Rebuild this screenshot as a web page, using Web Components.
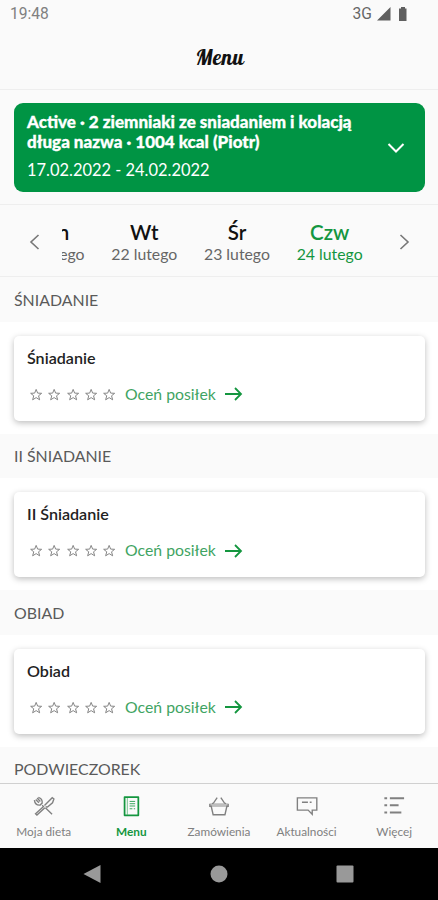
<!DOCTYPE html>
<html lang="pl">
<head>
<meta charset="utf-8">
<title>Menu</title>
<style>
    html, body {
        margin: 0;
        height: 100%;
        overflow: hidden;
        background: #fafafa;
        font-family: Lato, "Liberation Sans", sans-serif;
    }
</style>
</head>
<body>
<menu-app></menu-app>

<script>
const icons = {
    diet: `<path d="M13 14 4.300 21.800 2.800 20.500 11.500 12.500M12.500 11.500 21 3 22.800 4.300 21.300 8.500 15.800 13.200 13.800 12.800M13.500 14 20.800 21M10 11.200 12 13M1.500 5.500C2 9 4.500 11.300 7.700 11L10 8.800C10.300 6 8.800 3.300 5.800 2.500M3 5 6.500 8.500M4.500 3.300 8 7" stroke-width="1.500"/>`,
    menu: `<path d="M5 2.200h15v20H5z" stroke-width="1.900" stroke-linejoin="round"/><path d="M8 3v18.500" stroke-width=".6"/><path d="M10.500 7h6M10.500 9.500h6M10.500 12h6M10.500 15h3M15 15h1.500" stroke-width=".9"/>`,
    orders: `<path d="M2.500 9h19v4h-19z" fill="currentColor" opacity=".5" stroke="none"/><path d="M2 9.500v2.800h1.500L5.600 21.500h12.900l2.100-9.200h1.400V9.500" stroke-width="1.500"/><path d="M4.500 9.500 6 8.800 10 2.800M19.500 9.500 18 8.800 14 2.800" stroke-width="1.500"/>`,
    news: `<path d="M1.500 3.200h21.200v13.300h-5v4.500L13.200 16.500H1.500z" stroke-width="1.500"/><path d="M6.500 8h6.500M15 8h2" stroke-width="1.700"/>`,
    more: `<path d="M1.500 3.500h3M1.500 11.300h3M1.500 19h3M7.500 3.500h15.500M7.500 11.300h9.500M7.500 19h12.500" stroke-width="2.200"/>`
};

class StatusBar extends HTMLElement {
    constructor() {
        super();
        this.attachShadow({ mode: 'open' });
    }

    connectedCallback() {
        this.shadowRoot.innerHTML = `
            <style>
                :host {
                    display: flex;
                    align-items: center;
                    justify-content: space-between;
                    height: 28px;
                    padding: 0 30px 0 10px;
                    box-sizing: border-box;
                    font: 15.600px/29px Roboto, sans-serif;
                    color: #808080;
                }

                .signals {
                    display: flex;
                    align-items: center;
                    color: #666;
                }

                svg {
                    display: block;
                    fill: #5f5f5f;
                }
            </style>
            <span>19:48</span>
            <div class="signals">
                <span>3G</span>
                <svg width="36" height="16" viewBox="0 0 36 16"><path d="M5 14.500 18.500 1v13.500zM29 1h4v1.500h1.500V15h-7.500V2.500h2z"/></svg>
            </div>
        `;
    }
}

class PlanCard extends HTMLElement {
    constructor() {
        super();
        this.attachShadow({ mode: 'open' });
    }

    connectedCallback() {
        this.shadowRoot.innerHTML = `
            <style>
                :host {
                    display: flex;
                    align-items: center;
                    justify-content: space-between;
                    height: 89px;
                    padding: 0 20px 0 13px;
                    box-sizing: border-box;
                    border-radius: 9px;
                    background: #009444;
                    color: #fff;
                }

                .text {
                    padding-bottom: 4px;
                }

                .name {
                    font-size: 17px;
                    font-weight: 900;
                    line-height: 20px;
                    white-space: nowrap;
                    -webkit-text-stroke: .3px #fff;
                }

                .dates {
                    margin-top: 8px;
                    font-size: 16.450px;
                    line-height: 20px;
                }

                svg {
                    fill: none;
                    stroke: #fff;
                    stroke-width: 2;
                }
            </style>
            <div class="text">
                <div class="name"><slot></slot></div>
                <div class="dates"><slot name="dates"></slot></div>
            </div>
            <svg width="18" height="12" viewBox="0 0 18 12"><path d="m1.500 2 7.500 7.500L16.500 2"/></svg>
        `;
    }
}

class DayPicker extends HTMLElement {
    constructor() {
        super();
        this.attachShadow({ mode: 'open' });
    }

    connectedCallback() {
        this.shadowRoot.innerHTML = `
            <style>
                :host {
                    display: flex;
                    align-items: center;
                    height: 72px;
                    box-sizing: border-box;
                    border-bottom: 1px solid #eee;
                }

                .arrow {
                    display: flex;
                    flex: none;
                    justify-content: center;
                    box-sizing: border-box;
                    padding-top: 2px;
                    width: 62px;
                }

                .prev {
                    padding-left: 6px;
                }

                .next {
                    padding-right: 6px;
                }

                .days {
                    display: flex;
                    flex: 1;
                    justify-content: flex-end;
                    padding-top: 4px;
                    overflow: hidden;
                }

                svg {
                    fill: none;
                    stroke: #777;
                    stroke-width: 1.600;
                }
            </style>
            <div class="arrow prev"><svg width="11" height="16" viewBox="0 0 11 16"><path d="M9.500 1 2 8l7.500 7"/></svg></div>
            <div class="days"><slot></slot></div>
            <div class="arrow next"><svg width="11" height="16" viewBox="0 0 11 16"><path d="M1.500 1 9 8l-7.500 7"/></svg></div>
        `;
    }
}

class DayItem extends HTMLElement {
    constructor() {
        super();
        this.attachShadow({ mode: 'open' });
    }

    connectedCallback() {
        this.shadowRoot.innerHTML = `
            <style>
                :host {
                    display: block;
                    flex: none;
                    width: 92.700px;
                    text-align: center;
                    white-space: nowrap;
                    color: #111;
                }

                .day {
                    font-size: 20.500px;
                    font-weight: 600;
                    line-height: 22px;
                }

                .date {
                    font-size: 15.800px;
                    line-height: 22px;
                    color: #666;
                }

                :host([active]), :host([active]) .date {
                    color: #14963f;
                }
            </style>
            <div class="day">${this.getAttribute('day')}</div>
            <div class="date">${this.getAttribute('date')}</div>
        `;
    }
}

class MealSection extends HTMLElement {
    constructor() {
        super();
        this.attachShadow({ mode: 'open' });
    }

    connectedCallback() {
        const meal = this.getAttribute('meal');
        const star = '<svg width="18.300" height="16" viewBox="-9.150 -8 18.300 16"><path d="M0-5.600 1.500-1.900 5.500-1.700 2.400.8 3.500 4.800 0 2.600-3.500 4.800-2.400.8-5.500-1.700-1.500-1.900z"/></svg>';

        this.shadowRoot.innerHTML = `
            <style>
                :host {
                    display: block;
                    flex: none;
                    height: 156.450px;
                }

                h2 {
                    margin: 0;
                    padding: 1px 0 .5px 14px;
                    font-size: 15.900px;
                    font-weight: 400;
                    line-height: 43.400px;
                    color: #5a5a5a;
                }

                .body {
                    height: 112px;
                    box-sizing: border-box;
                    padding: 14px 13px 0 14px;
                    background: #fff;
                }

                .card {
                    height: 85px;
                    box-sizing: border-box;
                    padding: 12px 13px 0;
                    border-radius: 5px;
                    background: #fff;
                    box-shadow: 0 2px 6px rgba(0, 0, 0, .26);
                }

                .name {
                    font-size: 16.100px;
                    font-weight: 600;
                    line-height: 20px;
                    color: #222;
                }

                .rate {
                    display: flex;
                    align-items: center;
                    margin-top: 16px;
                    height: 22px;
                    font-size: 15.800px;
                    line-height: 20px;
                    color: #3fa463;
                }

                .rate span {
                    padding-bottom: 2px;
                }

                .stars {
                    display: flex;
                    width: 98px;
                }

                svg {
                    display: block;
                    flex: none;
                    fill: none;
                    stroke: #858585;
                    stroke-width: 1;
                }

                .go {
                    margin: 0 0 1px 8px;
                    stroke: #14963f;
                    stroke-width: 1.800;
                }
            </style>
            <h2>${meal.toUpperCase()}</h2>
            ${this.hasAttribute('collapsed') ? '' : `
                <div class="body">
                    <div class="card">
                        <div class="name">${meal}</div>
                        <div class="rate">
                            <div class="stars">${star.repeat(5)}</div>
                            <span>Oceń posiłek</span>
                            <svg class="go" width="19" height="16" viewBox="0 0 19 16"><path d="M1 8h16M11 2l6 6-6 6"/></svg>
                        </div>
                    </div>
                </div>
            `}
        `;
    }
}

class TabItem extends HTMLElement {
    constructor() {
        super();
        this.attachShadow({ mode: 'open' });
    }

    connectedCallback() {
        this.shadowRoot.innerHTML = `
            <style>
                :host {
                    display: flex;
                    flex: 1;
                    flex-direction: column;
                    align-items: center;
                    padding-top: 11px;
                    font-size: 11.800px;
                    line-height: 16px;
                    white-space: nowrap;
                    color: #808080;
                }

                :host([active]) {
                    font-weight: 700;
                    color: #14963f;
                }

                svg {
                    display: block;
                    margin-bottom: 7px;
                    fill: none;
                    stroke: currentColor;
                    stroke-width: 1.300;
                }
            </style>
            <svg width="22" height="22" viewBox="0 0 24 24">${icons[this.getAttribute('icon')]}</svg>
            <span><slot></slot></span>
        `;
    }
}

class SystemNav extends HTMLElement {
    constructor() {
        super();
        this.attachShadow({ mode: 'open' });
    }

    connectedCallback() {
        this.shadowRoot.innerHTML = `
            <style>
                :host {
                    display: flex;
                    align-items: center;
                    justify-content: space-between;
                    flex: none;
                    height: 52px;
                    padding: 0 84px 0 83px;
                    box-sizing: border-box;
                    background: #000;
                }

                svg {
                    fill: #999;
                }
            </style>
            <svg width="18" height="18"><path d="M17.500 0v18L.5 9z"/></svg>
            <svg width="18" height="18"><circle cx="9" cy="9" r="8.500"/></svg>
            <svg width="18" height="18"><rect x=".5" y=".5" width="17" height="17" rx="1"/></svg>
        `;
    }
}

class MenuApp extends HTMLElement {
    constructor() {
        super();
        this.attachShadow({ mode: 'open' });
    }

    connectedCallback() {
        this.shadowRoot.innerHTML = `
            <style>
                :host {
                    display: flex;
                    flex-direction: column;
                    height: 900px;
                    background: #fafafa;
                }

                h1 {
                    flex: none;
                    height: 62px;
                    margin: 0;
                    padding-left: 2px;
                    box-sizing: border-box;
                    border-bottom: 1px solid #eee;
                    font: 400 21.500px/58px Lobster, "Liberation Serif", serif;
                    letter-spacing: .5px;
                    text-align: center;
                    color: #111;
                }

                .plan {
                    flex: none;
                    height: 115px;
                    box-sizing: border-box;
                    padding: 13px 13px 0 14px;
                    border-bottom: 1px solid #eee;
                }

                .meals {
                    display: flex;
                    flex: 1;
                    flex-direction: column;
                    min-height: 0;
                    overflow: hidden;
                }

                .tabs {
                    display: flex;
                    flex: none;
                    height: 65px;
                    box-sizing: border-box;
                    border-top: 1px solid #d0d0d0;
                }
            </style>
            <status-bar></status-bar>
            <h1>Menu</h1>
            <div class="plan">
                <plan-card>
                    Active · 2 ziemniaki ze sniadaniem i kolacją<br>długa nazwa · 1004 kcal (Piotr)
                    <span slot="dates">17.02.2022 - 24.02.2022</span>
                </plan-card>
            </div>
            <day-picker>
                <day-item day="Pon" date="21 lutego"></day-item>
                <day-item day="Wt" date="22 lutego"></day-item>
                <day-item day="Śr" date="23 lutego"></day-item>
                <day-item day="Czw" date="24 lutego" active></day-item>
            </day-picker>
            <div class="meals">
                <meal-section meal="Śniadanie"></meal-section>
                <meal-section meal="II Śniadanie"></meal-section>
                <meal-section meal="Obiad"></meal-section>
                <meal-section meal="Podwieczorek" collapsed></meal-section>
            </div>
            <div class="tabs">
                <tab-item icon="diet">Moja dieta</tab-item>
                <tab-item icon="menu" active>Menu</tab-item>
                <tab-item icon="orders">Zamówienia</tab-item>
                <tab-item icon="news">Aktualności</tab-item>
                <tab-item icon="more">Więcej</tab-item>
            </div>
            <system-nav></system-nav>
        `;
    }
}

customElements.define('status-bar', StatusBar);
customElements.define('plan-card', PlanCard);
customElements.define('day-picker', DayPicker);
customElements.define('day-item', DayItem);
customElements.define('meal-section', MealSection);
customElements.define('tab-item', TabItem);
customElements.define('system-nav', SystemNav);
customElements.define('menu-app', MenuApp);
</script>
</body>
</html>
